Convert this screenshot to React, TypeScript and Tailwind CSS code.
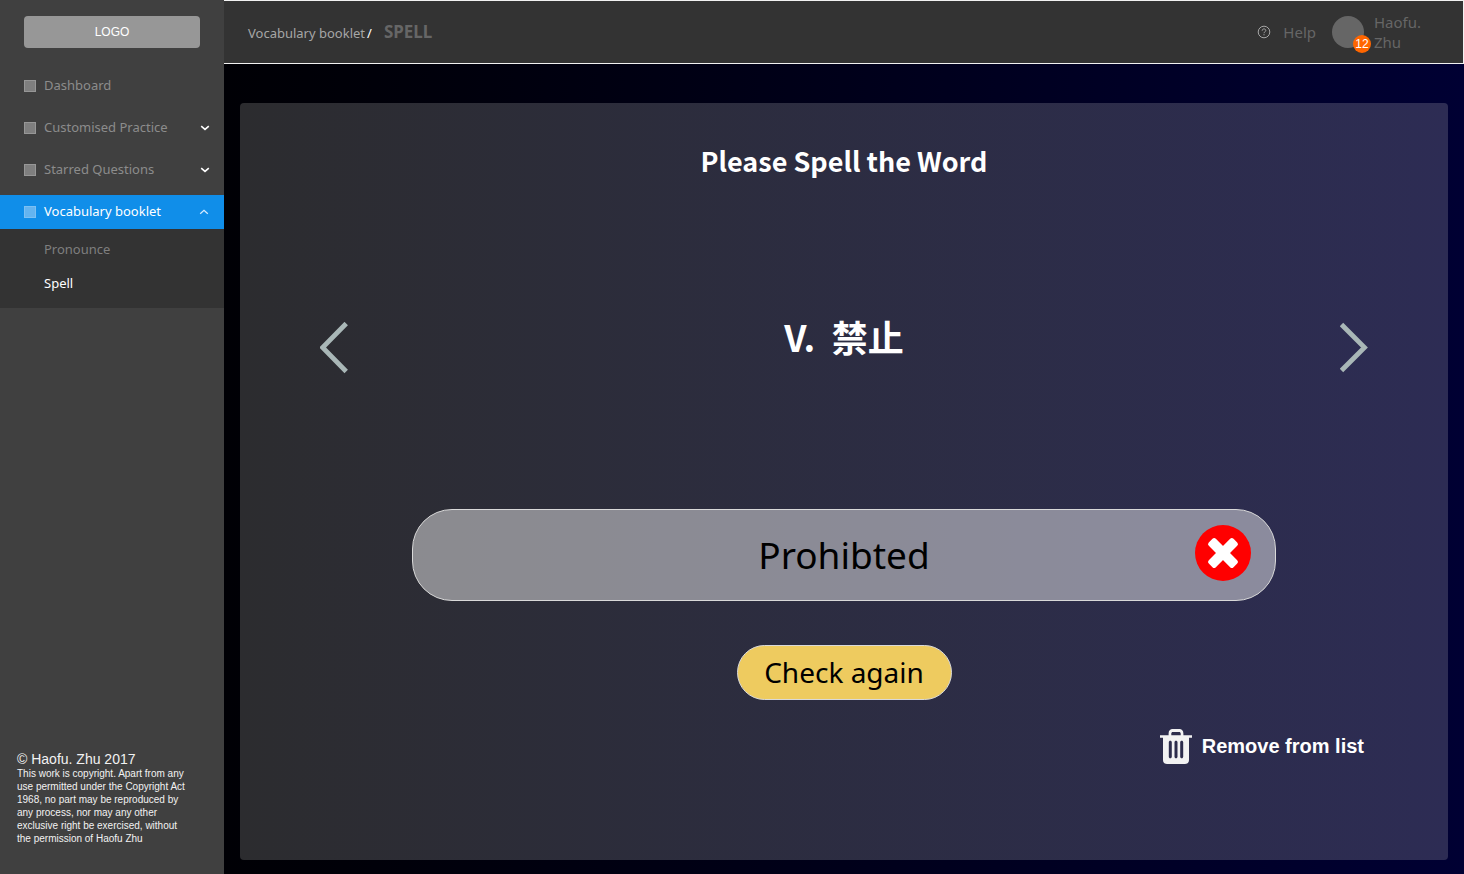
import { useState } from "react";

type NavItem = { label: string; expandable: boolean };

const navItems: NavItem[] = [
  { label: "Dashboard", expandable: false },
  { label: "Customised Practice", expandable: true },
  { label: "Starred Questions", expandable: true },
];

function Caret({ up = false }: { up?: boolean }) {
  return (
    <svg
      viewBox="0 0 10 6"
      className={up ? "mr-[15px] h-[6px] w-[10px]" : "mr-[14px] h-[6px] w-[10px]"}
      fill="none"
      stroke={up ? "#d6ebff" : "#fff"}
      strokeWidth={up ? 1.3 : 1.6}
      aria-hidden="true"
    >
      <path d={up ? "M1.2 4.8 5 1.3l3.8 3.5" : "M1.2 1.2 5 4.4l3.8-3.2"} />
    </svg>
  );
}

function Sidebar() {
  return (
    <aside className="flex w-56 shrink-0 flex-col bg-[#404040] text-[13px]">
      <a
        href="#home"
        className="mx-6 mt-4 flex h-8 items-center justify-center rounded-[4px] bg-[#979797] font-['Liberation_Sans',sans-serif] text-[12px] text-white"
      >
        LOGO
      </a>
      <nav className="mt-[21px]">
        <ul className="flex flex-col gap-2">
          {navItems.map((item) => (
            <li key={item.label}>
              <a href="#section" className="flex h-[34px] items-center pl-6 text-[#8c8c8c]">
                <span className="mr-2 size-3 border border-[#979797] bg-[#7f7f7f]" />
                <span className="flex-1">{item.label}</span>
                {item.expandable && <Caret />}
              </a>
            </li>
          ))}
          <li>
            <a href="#vocabulary" className="flex h-[34px] items-center bg-[#108ee9] pl-6 text-white">
              <span className="mr-2 size-3 border border-[#7cc0f3] bg-[#64b4f0]" />
              <span className="flex-1">Vocabulary booklet</span>
              <Caret up />
            </a>
            <ul className="bg-[#333333] pt-1 pb-[7px]">
              <li>
                <a href="#pronounce" className="flex h-[34px] items-center pl-11 text-[#7f7f7f]">
                  Pronounce
                </a>
              </li>
              <li>
                <a href="#spell" aria-current="page" className="flex h-[34px] items-center pl-11 text-white">
                  Spell
                </a>
              </li>
            </ul>
          </li>
        </ul>
      </nav>
      <footer className="mt-auto pr-[35px] pb-[29px] pl-[17px] font-['Liberation_Sans',sans-serif] text-[#f2f2f2]">
        <p className="text-[14px] leading-4">© Haofu. Zhu 2017</p>
        <p className="text-[10px] leading-[13px]">
          This work is copyright. Apart from any use permitted under the Copyright Act 1968, no part
          may be reproduced by any process, nor may any other exclusive right be exercised, without
          the permission of Haofu Zhu
        </p>
      </footer>
    </aside>
  );
}

function Header() {
  return (
    <header className="flex h-16 items-center border-y border-r border-[#f2f2f2] bg-[#333333] pl-6">
      <div className="flex items-baseline text-[13px]">
        <a href="#vocabulary" className="text-[#a6a6a6]">
          Vocabulary booklet
        </a>
        <span className="ml-[2px] text-white">/</span>
        <h1 className="ml-3 text-[17px] leading-6 font-bold text-[#666666]">SPELL</h1>
      </div>
      <a href="#help" className="ml-auto flex items-center gap-3 text-[15px] text-[#666666]">
        <svg viewBox="0 0 14 14" className="size-[14px]" fill="none" stroke="#a6a6a6" aria-hidden="true">
          <circle cx="7" cy="7" r="5.8" />
          <path d="M5.2 5.7c0-1.1.8-1.8 1.8-1.8s1.800.7 1.800 1.600C8.800 6.800 7 6.700 7 8.200M7 9.200v1.100" />
        </svg>
        Help
      </a>
      <div className="relative ml-4 size-8 rounded-full bg-[#666666]">
        <span className="absolute top-[19px] left-[21px] flex size-[18px] items-center justify-center rounded-full bg-[#ff6600] font-['Liberation_Sans',sans-serif] text-[12px] leading-none text-white">
          12
        </span>
      </div>
      <p className="mr-[29px] ml-[10px] w-[60px] text-[15px] leading-5 text-[#666666]">Haofu. Zhu</p>
    </header>
  );
}

function WrongIcon() {
  return (
    <svg viewBox="0 0 56 56" className="size-14" fill="#fff" aria-hidden="true">
      <rect x="10.500" y="23" width="35" height="10" rx="2.400" transform="rotate(45 28 28)" />
      <rect x="10.500" y="23" width="35" height="10" rx="2.400" transform="rotate(-45 28 28)" />
    </svg>
  );
}

function TrashIcon() {
  return (
    <svg viewBox="0 0 32 35" className="h-[35px] w-8" fill="none" aria-hidden="true">
      <path
        fill="#f2f2f2"
        fillRule="evenodd"
        d="M0 6.200h8.600V4.400C8.600 1.800 10.200 0 12.600 0h6.800c2.400 0 4 1.800 4 4.400v1.800H32v2.600h-3V31c0 2.500-1.500 4-4 4H7c-2.500 0-4-1.500-4-4V8.800H0ZM11.300 6.200h9.400V4.600c0-1-.6-1.700-1.600-1.700h-6.200c-1 0-1.600.7-1.600 1.700ZM10.300 11.700c-.9 0-1.500.6-1.500 1.500v14.600c0 .9.600 1.500 1.500 1.500s1.500-.6 1.500-1.500V13.200c0-.9-.6-1.500-1.500-1.500Zm5.700 0c-.9 0-1.500.6-1.500 1.500v14.600c0 .9.600 1.500 1.500 1.500s1.500-.6 1.500-1.500V13.200c0-.9-.6-1.500-1.500-1.500Zm5.700 0c-.9 0-1.500.6-1.500 1.500v14.600c0 .9.600 1.500 1.500 1.500s1.500-.6 1.500-1.500V13.200c0-.9-.6-1.500-1.500-1.500Z"
      />
    </svg>
  );
}

export default function App() {
  const [answer, setAnswer] = useState("Prohibted");

  return (
    <div className="flex min-h-screen bg-black font-['Noto_Sans','Noto_Sans_CJK_SC',sans-serif]">
      <Sidebar />
      <div className="flex min-w-0 flex-1 flex-col bg-linear-to-r from-[#000005] to-[#000033]">
        <Header />
        <main className="flex flex-1 flex-col px-4 pt-[39px] pb-[14px]">
          <section className="flex flex-1 flex-col rounded-[4px] bg-linear-to-r from-[#2c2c2f] to-[#2d2c54] pt-[38px] pb-10 text-white">
            <h2 className="text-center font-['Noto_Sans_CJK_SC',sans-serif] text-[27px] leading-10 font-bold">
              Please Spell the Word
            </h2>

            <div className="mt-[137px] flex h-[60px] items-center justify-between px-20">
              <button type="button" aria-label="Previous word">
                <svg viewBox="0 0 28 52" className="h-[52px] w-7" fill="none" stroke="#a9b7b7" strokeWidth="4.800">
                  <path d="M26.200 1.500 2.600 25.500l23.600 24" />
                </svg>
              </button>
              <p className="pb-6 font-['Noto_Sans_CJK_SC',sans-serif] text-[36px] leading-10 font-bold whitespace-pre">
                V.  禁止
              </p>
              <button type="button" aria-label="Next word">
                <svg viewBox="0 0 28 52" className="h-[52px] w-7" fill="none" stroke="#a9b7b7" strokeWidth="4.800">
                  <path d="M1.500 2.500 24.500 25.500l-23 23" />
                </svg>
              </button>
            </div>

            <div className="relative mx-auto mt-[131px] w-full max-w-[864px]">
              <input
                type="text"
                aria-label="Your spelling"
                spellCheck={false}
                value={answer}
                onChange={(event) => setAnswer(event.target.value)}
                className="block h-[92px] w-full rounded-[40px] border border-[#d9d9d9] bg-white/45 px-24 pb-[2px] text-center text-[37px] text-black outline-none"
              />
              <span className="absolute top-4 right-[25px] size-14 rounded-full bg-[#ff0000]">
                <WrongIcon />
              </span>
            </div>

            <button
              type="button"
              className="mx-auto mt-11 h-[55px] w-[215px] rounded-full border border-[#d9d9d9] bg-[#eecb5f] pb-[2px] text-[28px] leading-none text-black"
            >
              Check again
            </button>

            <button
              type="button"
              className="mt-[29px] mr-[84px] flex items-center gap-[10px] self-end font-['Liberation_Sans',sans-serif] text-[20px] leading-[35px] font-bold"
            >
              <TrashIcon />
              Remove from list
            </button>
          </section>
        </main>
      </div>
    </div>
  );
}
